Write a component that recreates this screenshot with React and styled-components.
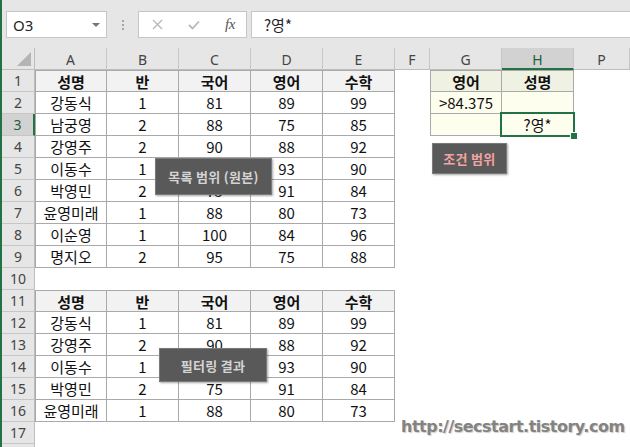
import React from "react";
import styled, { createGlobalStyle } from "styled-components";

const GlobalStyle = createGlobalStyle`
    html, body {
        margin: 0;
        padding: 0;
        background: #ffffff;
    }
    body {
        font-family: "Noto Sans CJK KR", "Noto Sans", sans-serif;
    }
`;

const COLS = ["A", "B", "C", "D", "E", "F", "G", "H", "P"];

const DATA = {
    1: ["성명", "반", "국어", "영어", "수학", "", "영어", "성명", ""],
    2: ["강동식", "1", "81", "89", "99", "", ">84.375", "", ""],
    3: ["남궁영", "2", "88", "75", "85", "", "", "?영*", ""],
    4: ["강영주", "2", "90", "88", "92"],
    5: ["이동수", "1", "", "93", "90"],
    6: ["박영민", "2", "75", "91", "84"],
    7: ["윤영미래", "1", "88", "80", "73"],
    8: ["이순영", "1", "100", "84", "96"],
    9: ["명지오", "2", "95", "75", "88"],
    10: [],
    11: ["성명", "반", "국어", "영어", "수학"],
    12: ["강동식", "1", "81", "89", "99"],
    13: ["강영주", "2", "90", "88", "92"],
    14: ["이동수", "1", "", "93", "90"],
    15: ["박영민", "2", "75", "91", "84"],
    16: ["윤영미래", "1", "88", "80", "73"],
    17: [],
    18: [],
};

// table ranges: rows r1..r2, column index c1..c2
const TABLES = [
    { r1: 1, r2: 9, c1: 0, c2: 4 },
    { r1: 11, r2: 16, c1: 0, c2: 4 },
    { r1: 1, r2: 3, c1: 6, c2: 7 },
];

const SELECTED = { row: 3, col: 7 };

const Window = styled.div`
    position: relative;
    width: 630px;
    height: 447px;
    overflow: hidden;
    border-left: 2px solid #217346;
    box-sizing: border-box;
    background: #ffffff;
`;

const TopBar = styled.div`
    height: 48px;
    background: #e6e6e6;
    display: flex;
    align-items: flex-start;
    padding: 11px 0 0 4px;
    box-sizing: border-box;
`;

const NameBox = styled.div`
    width: 101px;
    height: 27px;
    box-sizing: border-box;
    background: #ffffff;
    border: 1px solid #c6c6c6;
    display: flex;
    align-items: center;
    justify-content: space-between;
    padding: 0 6px 0 6px;
    font-family: "Noto Sans", sans-serif;
    font-size: 15px;
    color: #262626;
`;

const DropArrow = styled.span`
    width: 0;
    height: 0;
    border-left: 4px solid transparent;
    border-right: 4px solid transparent;
    border-top: 4px solid #767676;
`;

const Dots = styled.div`
    width: 31px;
    height: 27px;
    display: flex;
    flex-direction: column;
    align-items: center;
    justify-content: center;
    gap: 2px;

    span {
        width: 2px;
        height: 2px;
        background: #a6a6a6;
    }
`;

const FxBox = styled.div`
    width: 109px;
    height: 27px;
    box-sizing: border-box;
    background: #ffffff;
    border: 1px solid #c6c6c6;
    display: flex;
    align-items: center;
    padding: 0 0 0 13px;
    gap: 25px;
`;

const FxLabel = styled.span`
    font-family: "Liberation Serif", serif;
    font-style: italic;
    font-size: 15px;
    color: #555555;
    letter-spacing: -0.5px;
`;

const FormulaInput = styled.div`
    flex: 1;
    height: 27px;
    margin-left: 4px;
    box-sizing: border-box;
    background: #ffffff;
    border: 1px solid #c6c6c6;
    border-right: none;
    display: flex;
    align-items: center;
    padding-left: 12px;
    font-size: 15px;
    color: #262626;
`;

const Sheet = styled.div`
    display: grid;
    grid-template-columns: 33px 72px 72px 72px 72px 72px 35px 72px 72px 1fr;
    grid-auto-rows: 22px;
`;

const Corner = styled.div`
    position: relative;
    background: #e6e6e6;
    border-right: 1px solid #bdbdbd;
    border-bottom: 1px solid #bdbdbd;
    box-sizing: border-box;

    &::after {
        content: "";
        position: absolute;
        right: 3px;
        bottom: 3px;
        width: 0;
        height: 0;
        border-left: 14px solid transparent;
        border-bottom: 14px solid #b4b4b4;
    }
`;

const ColHead = styled.div`
    background: ${(p) => (p.$active ? "#d2d2d2" : "#e6e6e6")};
    color: ${(p) => (p.$active ? "#1e5e3a" : "#444444")};
    border-right: 1px solid #c6c6c6;
    border-bottom: ${(p) => (p.$active ? "2px solid #217346" : "1px solid #bdbdbd")};
    box-sizing: border-box;
    display: flex;
    align-items: center;
    justify-content: center;
    font-family: "Noto Sans", sans-serif;
    font-size: 14px;
    padding-top: 2px;
`;

const RowHead = styled.div`
    background: ${(p) => (p.$active ? "#d2d2d2" : "#e6e6e6")};
    color: ${(p) => (p.$active ? "#1e5e3a" : "#444444")};
    border-bottom: 1px solid #c6c6c6;
    border-right: ${(p) => (p.$active ? "2px solid #217346" : "1px solid #bdbdbd")};
    box-sizing: border-box;
    display: flex;
    align-items: center;
    justify-content: center;
    font-family: "Noto Sans", sans-serif;
    font-size: 14px;
`;

const Cell = styled.div`
    position: relative;
    box-sizing: border-box;
    background: ${(p) => p.$bg || "transparent"};
    font-weight: ${(p) => (p.$bold ? 700 : 400)};
    border-top: ${(p) => (p.$bt ? "1px solid #a9a9a9" : "none")};
    border-left: ${(p) => (p.$bl ? "1px solid #a9a9a9" : "none")};
    border-right: ${(p) => (p.$br ? "1px solid #a9a9a9" : "none")};
    border-bottom: ${(p) => (p.$bb ? "1px solid #a9a9a9" : "none")};
    display: flex;
    align-items: center;
    justify-content: center;
    font-size: 15px;
    color: #111111;
    white-space: nowrap;

    ${(p) =>
        p.$selected &&
        `
        &::after {
            content: "";
            position: absolute;
            left: -2px;
            top: -2px;
            right: -2px;
            bottom: -2px;
            border: 2px solid #217346;
        }
        &::before {
            content: "";
            position: absolute;
            right: -5px;
            bottom: -5px;
            width: 6px;
            height: 6px;
            background: #217346;
            border: 1px solid #ffffff;
            z-index: 2;
        }
    `}
`;

const Callout = styled.div`
    position: absolute;
    left: ${(p) => p.$x}px;
    top: ${(p) => p.$y}px;
    width: ${(p) => p.$w}px;
    height: ${(p) => p.$h}px;
    box-sizing: border-box;
    background: #595959;
    border: 1px solid #7a7a7a;
    box-shadow: 1px 1px 2px rgba(0, 0, 0, 0.35);
    color: ${(p) => p.$color || "#d4d4d4"};
    display: flex;
    align-items: center;
    justify-content: center;
    font-size: 13px;
    font-weight: 700;
    letter-spacing: 0.3px;
`;

const Watermark = styled.div`
    position: absolute;
    left: 399px;
    top: 417px;
    font-family: "DejaVu Sans", sans-serif;
    font-weight: 700;
    font-size: 16px;
    letter-spacing: -0.5px;
    color: #838383;
    text-shadow: 1px 1px 1px #cfcfcf;
`;

const cellProps = (row, col) => {
    const props = {};
    const table = TABLES.find(
        (t) => row >= t.r1 && row <= t.r2 && col >= t.c1 && col <= t.c2
    );
    if (table) {
        props.$br = true;
        props.$bb = true;
        if (row === table.r1) props.$bt = true;
        if (col === table.c1) props.$bl = true;
        if (col >= 6) {
            props.$bg = row === 1 ? "#eff2e3" : "#fefeef";
            props.$bold = row === 1;
        } else if (row === table.r1) {
            props.$bg = "#f2f2f2";
            props.$bold = true;
        }
    }
    if (row === SELECTED.row && col === SELECTED.col) props.$selected = true;
    return props;
};

const XIcon = () => (
    <svg width="11" height="11" viewBox="0 0 11 11">
        <path d="M1 1 L10 10 M10 1 L1 10" stroke="#b8b8b8" strokeWidth="1.4" fill="none" />
    </svg>
);

const CheckIcon = () => (
    <svg width="12" height="10" viewBox="0 0 12 10">
        <path d="M1 5 L4.5 8.5 L11 1.5" stroke="#b8b8b8" strokeWidth="1.8" fill="none" />
    </svg>
);

const App = () => {
    const rows = Object.keys(DATA).map(Number);
    return (
        <>
            <GlobalStyle />
            <Window>
                <TopBar>
                    <NameBox>
                        <span>O3</span>
                        <DropArrow />
                    </NameBox>
                    <Dots>
                        <span />
                        <span />
                        <span />
                    </Dots>
                    <FxBox>
                        <XIcon />
                        <CheckIcon />
                        <FxLabel>fx</FxLabel>
                    </FxBox>
                    <FormulaInput>?영*</FormulaInput>
                </TopBar>

                <Sheet>
                    <Corner />
                    {COLS.map((c, i) => (
                        <ColHead key={c} $active={i === SELECTED.col}>
                            {c}
                        </ColHead>
                    ))}
                    {rows.map((row) => (
                        <React.Fragment key={row}>
                            <RowHead $active={row === SELECTED.row}>
                                {row < 18 ? row : ""}
                            </RowHead>
                            {COLS.map((c, col) => (
                                <Cell key={c} {...cellProps(row, col)}>
                                    {DATA[row][col] || ""}
                                </Cell>
                            ))}
                        </React.Fragment>
                    ))}
                </Sheet>

                <Callout $x={153} $y={158} $w={117} $h={37}>
                    목록 범위 (원본)
                </Callout>
                <Callout $x={430} $y={143} $w={75} $h={31} $color="#f3a3a3">
                    조건 범위
                </Callout>
                <Callout $x={157} $y={348} $w={108} $h={34}>
                    필터링 결과
                </Callout>
                <Watermark>http://secstart.tistory.com</Watermark>
            </Window>
        </>
    );
};

export default App;
